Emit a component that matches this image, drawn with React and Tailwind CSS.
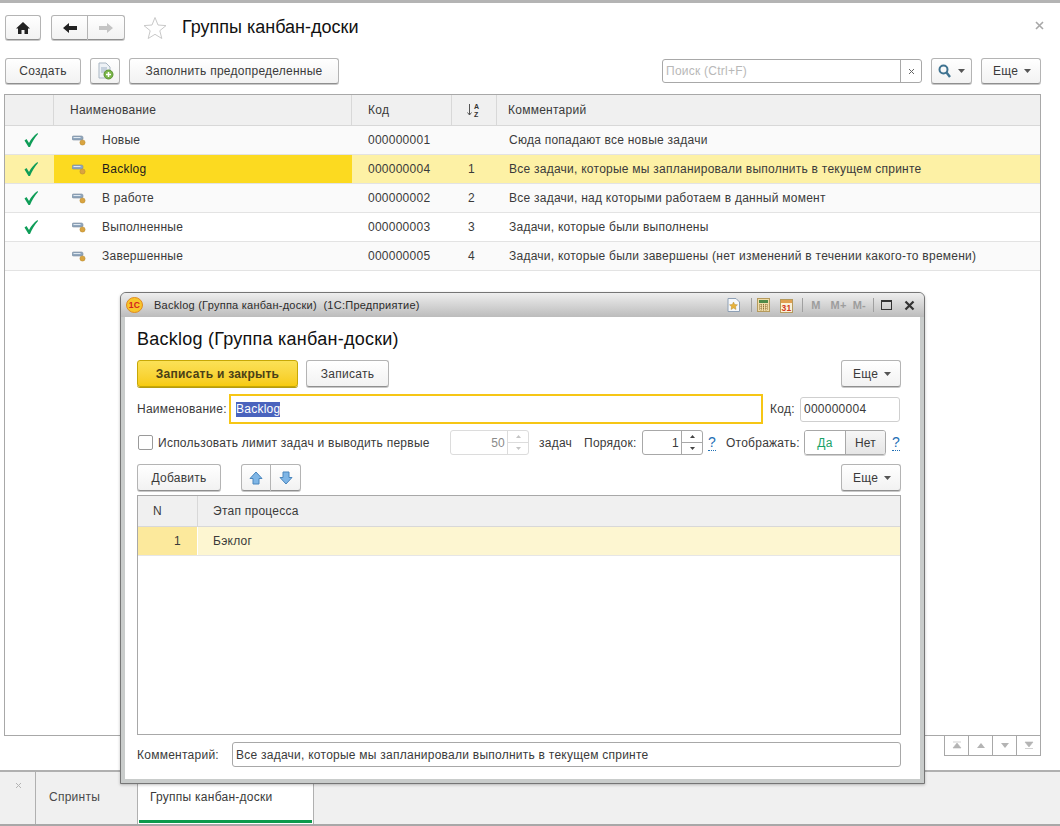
import React from "react";

const rows = [
  { on: true, name: "Новые", code: "000000001", order: "", comment: "Сюда попадают все новые задачи" },
  { on: true, name: "Backlog", code: "000000004", order: "1", comment: "Все задачи, которые мы запланировали выполнить в текущем спринте", selected: true },
  { on: true, name: "В работе", code: "000000002", order: "2", comment: "Все задачи, над которыми работаем в данный момент" },
  { on: true, name: "Выполненные", code: "000000003", order: "3", comment: "Задачи, которые были выполнены" },
  { on: false, name: "Завершенные", code: "000000005", order: "4", comment: "Задачи, которые были завершены (нет изменений в течении какого-то времени)" },
];

const Btn = ({ className = "", children }) => (
  <div
    className={`flex items-center justify-center rounded-[3px] border border-[#b4b4b4] border-b-[#8f8f8f] bg-linear-to-b from-white to-[#f2f2f2] shadow-[0_1px_0_#c8c8c8] text-[#3a3a3a] ${className}`}
  >
    {children}
  </div>
);

const Caret = () => (
  <svg width="7" height="4" viewBox="0 0 7 4" className="shrink-0">
    <path d="M0 0h7L3.5 4z" fill="#555" />
  </svg>
);

const Check = () => (
  <svg width="16" height="16" viewBox="0 0 16 16">
    <path d="M1.5 8.5 L3.5 7 L6 11 C8 7 11 3.5 14.5 1 L15 2 C11.5 6 9 10 7 15 L5.5 15 Z" fill="#0f9d58" />
  </svg>
);

const GroupIcon = () => (
  <svg width="14" height="12" viewBox="0 0 14 12">
    <rect x="0" y="2" width="11" height="4" rx="1.5" fill="#8fa6bd" stroke="#7c8c9c" strokeWidth="0.6" />
    <rect x="1.5" y="3" width="7" height="1" fill="#dfe8f0" />
    <circle cx="10.5" cy="8.5" r="2.6" fill="#d9a441" stroke="#b98a2e" strokeWidth="0.5" />
  </svg>
);

const Spin = ({ disabled }) => (
  <div className={`flex flex-col w-[21px] h-full border-l ${disabled ? "border-[#dcdcdc]" : "border-[#a8a8a8]"}`}>
    <div className={`flex-1 flex items-center justify-center border-b ${disabled ? "border-[#dcdcdc]" : "border-[#a8a8a8]"}`}>
      <svg width="5" height="3" viewBox="0 0 5 3"><path d="M0 3h5L2.5 0z" fill={disabled ? "#c4c4c4" : "#444"} /></svg>
    </div>
    <div className="flex-1 flex items-center justify-center">
      <svg width="5" height="3" viewBox="0 0 5 3"><path d="M0 0h5L2.5 3z" fill={disabled ? "#c4c4c4" : "#444"} /></svg>
    </div>
  </div>
);

const Help = () => (
  <span className="text-[#1f6fb5] border-b border-dotted border-[#1f6fb5] leading-[13px] text-[14px]">?</span>
);

const Dialog = () => (
  <div className="absolute left-[120px] top-[292px] w-[805px] h-[492px] flex flex-col rounded-t-[6px] border border-[#757575] bg-[#c9cccb] shadow-[0_1px_3px_rgba(0,0,0,0.25)]">
    {/* title bar */}
    <div className="h-[24px] shrink-0 flex items-center rounded-t-[5px] bg-linear-to-b from-[#eeeeee] to-[#bcbcbc] pl-[5px] pr-[9px]">
      <svg width="17" height="16" viewBox="0 0 17 16">
        <ellipse cx="8.5" cy="8" rx="8" ry="7.5" fill="#f7c52b" stroke="#e08a20" />
        <text x="8.5" y="11" textAnchor="middle" fontSize="8.5" fontWeight="700" fill="#d3201f" fontFamily="Liberation Sans">1С</text>
      </svg>
      <span className="ml-[11px] text-[11px] text-[#2c2c2c]">Backlog (Группа канбан-доски)&nbsp; (1С:Предприятие)</span>
      <div className="ml-auto flex items-center">
        <svg width="13" height="14" viewBox="0 0 13 14">
          <path d="M1 .5h8l3.5 3.5v9.5H1z" fill="#f6f8fb" stroke="#8ea0b5" />
          <path d="M6.5 4l1.2 2.5 2.8.3-2 1.9.5 2.8-2.5-1.4L4 11.5l.5-2.8-2-1.9 2.8-.3z" fill="#e8b23a" stroke="#a9802a" strokeWidth=".4" />
        </svg>
        <div className="w-px h-[14px] bg-[#a0a0a0] ml-[11px] mr-[5px]" />
        <svg width="13" height="14" viewBox="0 0 13 14">
          <rect x=".5" y=".5" width="12" height="13" fill="#efdca8" stroke="#b59a5c" />
          <rect x="2" y="2" width="9" height="3" fill="#4e8a47" />
          <path d="M2 7h9M2 9h9M2 11h9M4 6v6.5M6.5 6v6.5M9 6v6.5" stroke="#8b6a30" strokeWidth=".9" strokeDasharray="1 1" />
        </svg>
        <svg width="13" height="15" viewBox="0 0 13 15" className="ml-[10px]">
          <rect x=".5" y="1.5" width="12" height="13" fill="#fbf1d8" stroke="#b59a5c" />
          <rect x="1" y="2" width="11" height="3" fill="#e0a050" />
          <text x="6.5" y="13" textAnchor="middle" fontSize="8.5" fontWeight="700" fill="#d23a1c" fontFamily="Liberation Sans">31</text>
        </svg>
        <div className="w-px h-[14px] bg-[#a0a0a0] ml-[9px]" />
        <span className="ml-[8px] text-[11px] font-bold text-[#9d9d9d]">M</span>
        <span className="ml-[10px] text-[11px] font-bold text-[#9d9d9d]">M+</span>
        <span className="ml-[6px] text-[11px] font-bold text-[#9d9d9d]">M-</span>
        <div className="w-px h-[14px] bg-[#a0a0a0] ml-[7px]" />
        <div className="ml-[7px] w-[11px] h-[10px] border border-[#333] border-t-2" />
        <svg width="11" height="11" viewBox="0 0 11 11" className="ml-[12px]">
          <path d="M1.5 1.5l8 8M9.5 1.5l-8 8" stroke="#333" strokeWidth="2.2" />
        </svg>
      </div>
    </div>
    {/* body */}
    <div className="flex-1 min-h-0 flex flex-col bg-white ml-[4px] mr-[4px] mb-[4px] pl-[12px] pr-[19px] text-[#3a3a3a]">
      <div className="mt-[11px] h-[22px] text-[18px] leading-[22px] text-[#111]">Backlog (Группа канбан-доски)</div>
      <div className="mt-[10px] flex h-[27px]">
        <div className="w-[161px] flex items-center justify-center rounded-[3px] border border-[#c7a806] bg-linear-to-b from-[#fbe156] to-[#f7cb0c] shadow-[0_1px_0_#b59b10] font-bold text-[#4a4016]">Записать и закрыть</div>
        <Btn className="w-[83px] ml-[8px]">Записать</Btn>
        <Btn className="w-[60px] ml-auto gap-[6px] pl-[2px]">Еще <Caret /></Btn>
      </div>
      <div className="mt-[7px] flex items-center h-[30px]">
        <span className="w-[92px]">Наименование:</span>
        <div className="w-[534px] h-[30px] border-2 border-[#f6c615] flex items-center pl-[5px]">
          <span className="bg-[#4a63bd] text-white leading-[15px]">Backlog</span>
        </div>
        <span className="ml-[7px] w-[30px]">Код:</span>
        <div className="w-[100px] h-[25px] border border-[#cfcfcf] rounded-[3px] flex items-center pl-[3px]">000000004</div>
      </div>
      <div className="mt-[6px] flex items-center h-[25px]">
        <div className="ml-px w-[15px] h-[15px] border border-[#9a9a9a] rounded-[2px]" />
        <span className="ml-[5px] w-[292px]">Использовать лимит задач и выводить первые</span>
        <div className="w-[79px] h-[25px] flex items-center justify-between border border-[#dcdcdc] rounded-[3px] text-[#8a8a8a]">
          <span className="flex-1 text-right pr-[2px]">50</span>
          <Spin disabled />
        </div>
        <span className="ml-[10px] w-[45px]">задач</span>
        <span className="w-[58px]">Порядок:</span>
        <div className="w-[61px] h-[25px] flex items-center border border-[#a8a8a8] rounded-[3px]">
          <span className="flex-1 text-right pr-[2px]">1</span>
          <Spin />
        </div>
        <span className="ml-[5px] w-[18px]"><Help /></span>
        <span className="w-[78px]">Отображать:</span>
        <div className="w-[82px] h-[25px] flex border border-[#a8a8a8] rounded-[3px] overflow-hidden shadow-[0_1px_0_#d0d0d0]">
          <div className="w-[40px] flex items-center justify-center text-[#1aa267] bg-white">Да</div>
          <div className="flex-1 flex items-center justify-center border-l border-[#a8a8a8] bg-linear-to-b from-[#f6f6f6] to-[#e6e6e6]">Нет</div>
        </div>
        <span className="ml-[6px]"><Help /></span>
      </div>
      <div className="mt-[9px] flex h-[27px]">
        <Btn className="w-[84px]">Добавить</Btn>
        <div className="ml-[20px] flex">
          <Btn className="w-[30px] rounded-r-none">
            <svg width="14" height="14" viewBox="0 0 14 14"><path d="M7 1l6 6.5H10V13H4V7.5H1z" fill="#7fb6e6" stroke="#4a86bd" /></svg>
          </Btn>
          <Btn className="w-[30px] rounded-l-none border-l-0">
            <svg width="14" height="14" viewBox="0 0 14 14"><path d="M7 13L1 6.500H4V1h6v5.500h3z" fill="#7fb6e6" stroke="#4a86bd" /></svg>
          </Btn>
        </div>
        <Btn className="w-[60px] ml-auto gap-[6px] pl-[2px]">Еще <Caret /></Btn>
      </div>
      {/* nested table */}
      <div className="mt-[4px] h-[240px] border border-[#a8a8a8] flex flex-col">
        <div className="h-[31px] flex items-center bg-[#f0f0f0] border-b border-[#d8d8d8]">
          <div className="w-[60px] h-full border-r border-[#d8d8d8] flex items-center pl-[15px]">N</div>
          <div className="pl-[15px]">Этап процесса</div>
        </div>
        <div className="h-[29px] flex items-center border-b border-[#e6e6e6] bg-[#fdf6d1]">
          <div className="w-[60px] h-full border-r border-white bg-[#fce99c] flex items-center justify-end pr-[16px]">1</div>
          <div className="pl-[15px]">Бэклог</div>
        </div>
      </div>
      <div className="mt-[7px] flex items-center h-[25px]">
        <span className="w-[95px]">Комментарий:</span>
        <div className="flex-1 h-[25px] border border-[#a8a8a8] rounded-[3px] flex items-center pl-[3px]">Все задачи, которые мы запланировали выполнить в текущем спринте</div>
      </div>
    </div>
  </div>
);

export default function App() {
  return (
    <div
      className="relative w-[1060px] h-[826px] overflow-hidden bg-white flex flex-col text-[12px] text-[#3a3a3a] tracking-[0.25px]"
      style={{ fontFamily: '"Liberation Sans", Arial, sans-serif' }}
    >
      <div className="h-[3px] shrink-0 bg-[#b4b4b4]" />
      {/* header */}
      <div className="mt-[12px] h-[25px] shrink-0 flex items-center pl-[5px] pr-[16px]">
        <Btn className="w-[36px] h-[25px]">
          <svg width="14" height="12" viewBox="0 0 14 12"><path d="M7 0L0 6.500h2V12h3.500V8h3v4H12V6.500h2z" fill="#222" /></svg>
        </Btn>
        <div className="ml-[10px] flex">
          <Btn className="w-[37px] h-[25px] rounded-r-none">
            <svg width="14" height="10" viewBox="0 0 14 10"><path d="M0 5l6-5v3h8v4H6v3z" fill="#222" /></svg>
          </Btn>
          <Btn className="w-[37px] h-[25px] rounded-l-none border-l-0">
            <svg width="14" height="10" viewBox="0 0 14 10"><path d="M14 5L8 0v3H0v4h8v3z" fill="#c4c4c4" /></svg>
          </Btn>
        </div>
        <svg width="24" height="24" viewBox="0 0 24 24" className="ml-[18px]">
          <path d="M12 1.500l3 7.500 8 .6-6.200 5.100 2 7.800L12 18.300l-6.800 4.200 2-7.800L1 9.600 9 9z" fill="none" stroke="#c9c9c9" />
        </svg>
        <span className="ml-[15px] text-[18px] text-[#111] tracking-normal">Группы канбан-доски</span>
        <svg width="9" height="9" viewBox="0 0 9 9" className="ml-auto -mt-[4px]">
          <path d="M1 1l7 7M8 1l-7 7" stroke="#a8a8a8" strokeWidth="1.600" />
        </svg>
      </div>
      {/* command bar */}
      <div className="mt-[18px] h-[26px] shrink-0 flex items-center pl-[5px] pr-[19px]">
        <Btn className="w-[76px] h-[26px]">Создать</Btn>
        <Btn className="ml-[9px] w-[30px] h-[26px]">
          <svg width="18" height="18" viewBox="0 0 18 18">
            <path d="M3 1h7l4 4v11H3z" fill="#eef2f6" stroke="#a9b6c3" />
            <path d="M5 6h6M5 8h6M5 10h4" stroke="#9db0c4" />
            <circle cx="12.500" cy="12.500" r="4.500" fill="#7ab648" stroke="#5a9233" />
            <path d="M12.500 10v5M10 12.500h5" stroke="#fff" strokeWidth="1.500" />
          </svg>
        </Btn>
        <Btn className="ml-[9px] w-[210px] h-[26px]">Заполнить предопределенные</Btn>
        <div className="ml-auto w-[260px] h-[24px] flex border border-[#a8a8a8] rounded-[3px]">
          <span className="flex-1 pl-[3px] flex items-center text-[#b8b8b8]">Поиск (Ctrl+F)</span>
          <div className="w-[21px] border-l border-[#a8a8a8] flex items-center justify-center">
            <svg width="7" height="7" viewBox="0 0 7 7"><path d="M1 1l5 5M6 1l-5 5" stroke="#666" /></svg>
          </div>
        </div>
        <Btn className="ml-[9px] w-[41px] h-[26px] gap-[7px]">
          <svg width="13" height="14" viewBox="0 0 13 14">
            <circle cx="5.500" cy="5.500" r="4" fill="none" stroke="#3f7391" strokeWidth="2" />
            <path d="M8.500 8.500L12 13" stroke="#3f7391" strokeWidth="2.400" />
          </svg>
          <Caret />
        </Btn>
        <Btn className="ml-[9px] w-[60px] h-[26px] gap-[6px] pl-[2px]">Еще <Caret /></Btn>
      </div>
      {/* list */}
      <div className="mt-[10px] ml-[4px] mr-[19px] h-[642px] shrink-0 border border-[#a8a8a8] flex flex-col">
        <div className="h-[31px] shrink-0 grid grid-cols-[49px_298px_100px_45px_1fr] items-center bg-[#f0f0f0] border-b border-[#d8d8d8]">
          <div className="h-full border-r border-[#d8d8d8]" />
          <div className="h-full border-r border-[#d8d8d8] flex items-center pl-[16px]">Наименование</div>
          <div className="h-full border-r border-[#d8d8d8] flex items-center pl-[16px]">Код</div>
          <div className="h-full border-r border-[#d8d8d8] flex items-center justify-center">
            <svg width="16" height="16" viewBox="0 0 16 16">
              <path d="M3.500 2v11M1.500 10.500l2 2.500 2-2.500" fill="none" stroke="#555" />
              <text x="8" y="7" fontSize="7" fontWeight="700" fill="#333" fontFamily="Liberation Sans">A</text>
              <text x="8" y="15" fontSize="7" fontWeight="700" fill="#333" fontFamily="Liberation Sans">Z</text>
            </svg>
          </div>
          <div className="pl-[11px]">Комментарий</div>
        </div>
        {rows.map((row, i) => (
          <div
            key={row.code}
            className={`h-[29px] shrink-0 grid grid-cols-[49px_298px_100px_45px_1fr] items-center border-b border-[#e3e3e3] ${row.selected ? "bg-[#fdf1a5]" : i % 2 === 0 ? "bg-[#fafafa]" : "bg-white"}`}
          >
            <div className="flex justify-center pl-[2px]">{row.on && <Check />}</div>
            <div className={`h-full flex items-center pl-[18px] ${row.selected ? "bg-[#fcda20] text-[#1c1c1c]" : ""}`}>
              <GroupIcon />
              <span className="ml-[16px]">{row.name}</span>
            </div>
            <div className="pl-[16px]">{row.code}</div>
            <div className="pl-[16px]">{row.order}</div>
            <div className="pl-[12px] whitespace-nowrap">{row.comment}</div>
          </div>
        ))}
      </div>
      {/* pager */}
      <div className="-mt-px mr-[19px] self-end h-[21px] w-[97px] shrink-0 flex border border-[#a8a8a8]">
        {["M1 1h8M5 2L1 7h8z", "M5 2L1 7h8z", "M1 2h8L5 7z", "M1 1h8L5 6zM1 7.500h8"].map((d, i) => (
          <div key={d} className={`flex-1 flex items-center justify-center ${i ? "border-l border-[#a8a8a8]" : ""}`}>
            <svg width="10" height="9" viewBox="0 0 10 9"><path d={d} fill="#b4b4b4" stroke={d.includes("h8M") || d.includes("M1 7") ? "#b4b4b4" : "none"} strokeWidth=".6" /></svg>
          </div>
        ))}
      </div>
      {/* tabs */}
      <div className="mt-[14px] flex-1 min-h-0 flex bg-[#f0f0f0] border-t-2 border-[#b0b0b0] border-b-2 border-b-[#a8a8a8]">
        <div className="w-[36px] border-r border-[#b0b0b0] pt-[10px] pl-[15px]">
          <svg width="7" height="7" viewBox="0 0 7 7"><path d="M1 1l5 5M6 1l-5 5" stroke="#b4b4b4" /></svg>
        </div>
        <div className="w-[101px] flex items-center pl-[13px] pb-[2px] text-[#4a4a4a]">Спринты</div>
        <div className="w-[177px] bg-white border-x border-[#b0b0b0] flex flex-col">
          <div className="flex-1 flex items-center pl-[12px] pt-[1px]">Группы канбан-доски</div>
          <div className="h-[3px] mx-px mb-px bg-[#0c9a4c]" />
        </div>
      </div>
      <Dialog />
    </div>
  );
}
